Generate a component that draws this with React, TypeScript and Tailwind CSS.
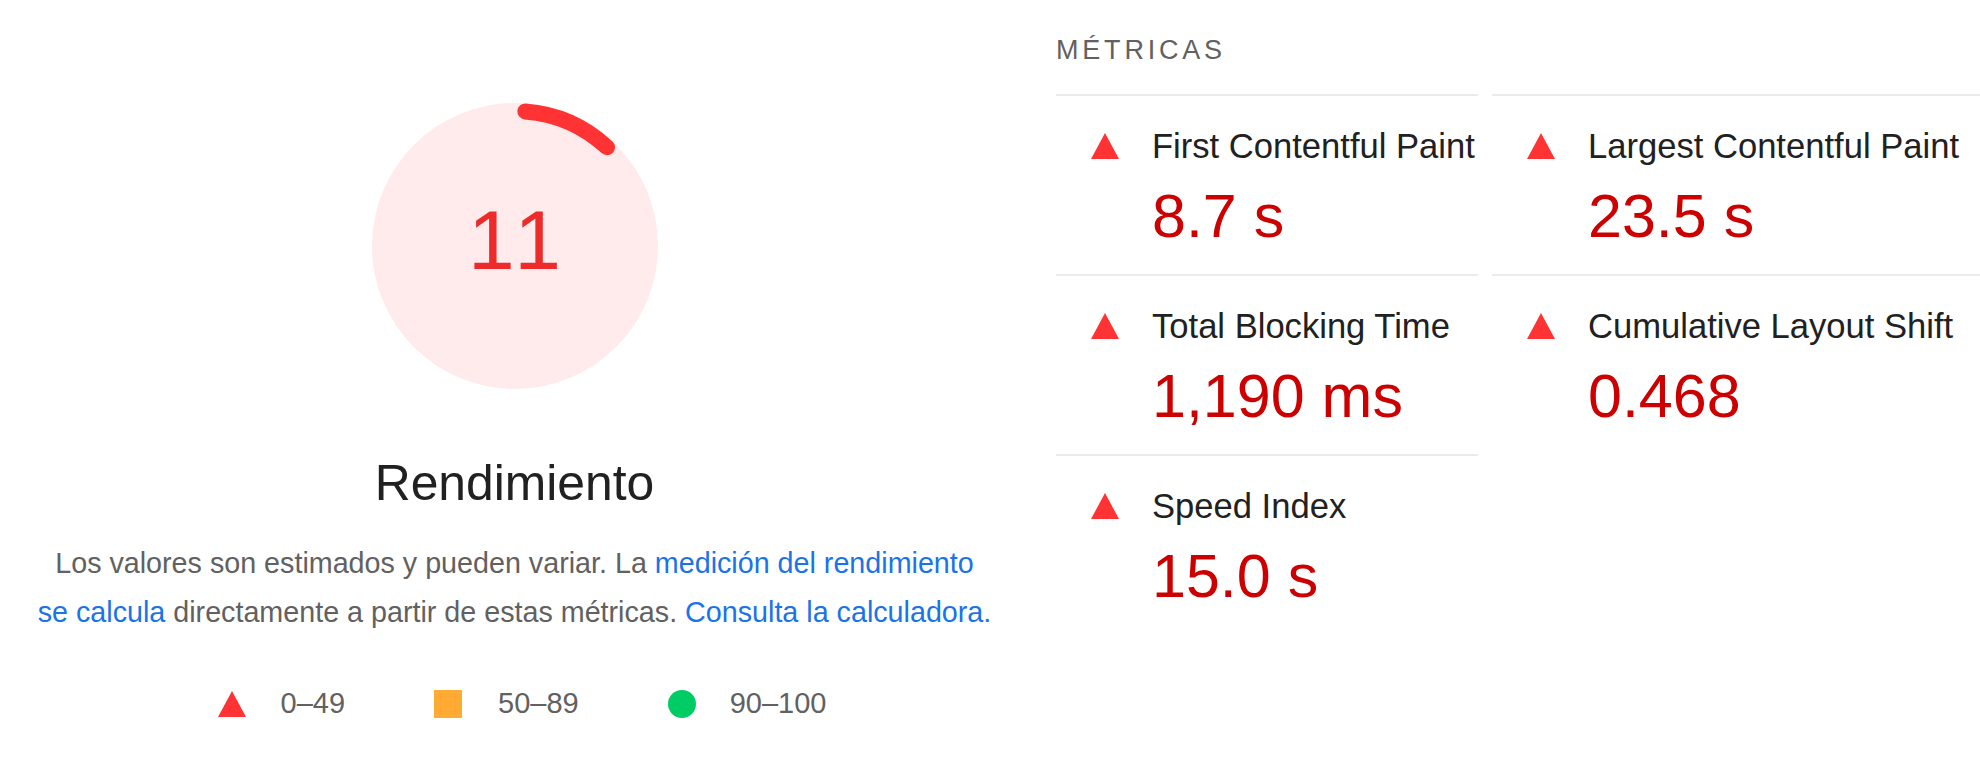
import React from 'react';

type Metric = { title: string; value: string };

const metricsLeft: Metric[] = [
  { title: 'First Contentful Paint', value: '8.7 s' },
  { title: 'Total Blocking Time', value: '1,190 ms' },
  { title: 'Speed Index', value: '15.0 s' },
];

const metricsRight: Metric[] = [
  { title: 'Largest Contentful Paint', value: '23.5 s' },
  { title: 'Cumulative Layout Shift', value: '0.468' },
];

function FailTriangle() {
  return (
    <svg width="28" height="26" viewBox="0 0 28 26" className="shrink-0">
      <polygon points="14,0 28,26 0,26" fill="#ff3333" />
    </svg>
  );
}

function MetricCell({ metric }: { metric: Metric }) {
  return (
    <div className="border-t-2 border-[#ebebeb] pt-[30px] pb-[22px]">
      <div className="flex items-center h-[40px] pl-[35px] gap-[33px]">
        <FailTriangle />
        <span className="text-[34.6px] leading-[40px] text-[#212121] whitespace-nowrap">{metric.title}</span>
      </div>
      <div className="pl-[96px] mt-[14px] text-[61px] leading-[72px] text-[#cc0000] whitespace-nowrap">
        {metric.value}
      </div>
    </div>
  );
}

function Gauge() {
  return (
    <div className="relative w-[290px] h-[290px]">
      <svg width="290" height="290" viewBox="0 0 290 290" className="block">
        <circle cx="145" cy="145" r="143" fill="#ffebeb" />
        <path
          d="M 155.36 10.4 A 135 135 0 0 1 237.07 46.27"
          fill="none"
          stroke="#ff3333"
          strokeWidth="16"
          strokeLinecap="round"
        />
      </svg>
      <div className="absolute inset-0 flex items-center justify-center pb-[12px] pl-[6px]">
        <span className="text-[84px] leading-none tracking-[6px] text-[#ee2b2b]">11</span>
      </div>
    </div>
  );
}

export default function App() {
  return (
    <div
      className="w-[1980px] h-[776px] bg-white flex overflow-hidden"
      style={{ fontFamily: '"Liberation Sans", Arial, sans-serif' }}
    >
      {/* izquierda: gauge */}
      <div className="w-[1029px] shrink-0 flex flex-col items-center pt-[101px]">
        <Gauge />
        <div className="mt-[64px] text-[49.8px] leading-[56px] text-[#212121]">Rendimiento</div>
        <p className="mt-[28px] text-[28.7px] leading-[49px] text-[#616161] text-center whitespace-nowrap">
          Los valores son estimados y pueden variar. La{' '}
          <a className="text-[#1a73e8]">
            medición del rendimiento
            <br />
            se calcula
          </a>{' '}
          directamente a partir de estas métricas.{' '}
          <a className="text-[#1a73e8]">Consulta la calculadora.</a>
        </p>
        <div className="mt-[52px] h-[30px] flex items-center gap-[89px] pl-[15px] text-[29px] text-[#616161]">
          <div className="flex items-center gap-[35px]">
            <FailTriangle />
            <span>0–49</span>
          </div>
          <div className="flex items-center gap-[36px]">
            <div className="w-[28px] h-[28px] bg-[#ffaa33]" />
            <span>50–89</span>
          </div>
          <div className="flex items-center gap-[34px]">
            <div className="w-[28px] h-[28px] rounded-full bg-[#00cc66]" />
            <span>90–100</span>
          </div>
        </div>
      </div>

      {/* derecha: métricas */}
      <div className="flex-1 pl-[27px] pt-[35px]">
        <div className="text-[27px] leading-[30px] tracking-[3.8px] text-[#616161]">MÉTRICAS</div>
        <div className="mt-[29px] grid grid-cols-[422px_1fr] gap-x-[14px] items-start">
          <div>
            {metricsLeft.map((m) => (
              <MetricCell key={m.title} metric={m} />
            ))}
          </div>
          <div>
            {metricsRight.map((m) => (
              <MetricCell key={m.title} metric={m} />
            ))}
          </div>
        </div>
      </div>
    </div>
  );
}
